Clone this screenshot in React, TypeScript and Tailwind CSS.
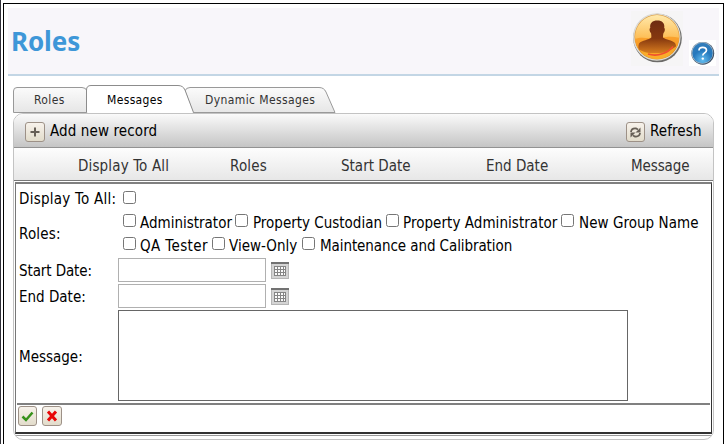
import React from "react";

function Tick({ label, className, text }: { label: string; className?: string; text?: string }) {
  return (
    <label className={`flex h-[23px] shrink-0 ${className ?? ""}`}>
      <Box />
      <span className={`-mt-px whitespace-nowrap leading-5 ${text ?? "ml-1"}`}>{label}</span>
    </label>
  );
}

function Box() {
  return <input type="checkbox" className="block size-[13px] shrink-0 appearance-none rounded-[2.5px] border border-[#767676] bg-white" />;
}

function IconButton({ children, className }: { children: React.ReactNode; className?: string }) {
  return (
    <button className={`flex h-5 shrink-0 items-center justify-center rounded-[3px] border border-[#9d9187] bg-linear-to-b from-[#f7f2eb] to-[#e2dccb] ${className ?? ""}`}>
      {children}
    </button>
  );
}

function Avatar() {
  return (
    <svg width="52" height="55" viewBox="0 0 52 55" className="block">
      <defs>
        <linearGradient id="gold" x1="0" y1="0" x2="0" y2="1">
          <stop offset="0" stopColor="#ffe9ab" />
          <stop offset=".5" stopColor="#fdc05a" />
          <stop offset=".75" stopColor="#f9a02c" />
          <stop offset="1" stopColor="#ffc936" />
        </linearGradient>
        <linearGradient id="person" x1="0" y1="0" x2="0" y2="1">
          <stop offset="0" stopColor="#6e2c12" />
          <stop offset=".55" stopColor="#85380f" />
          <stop offset="1" stopColor="#d77c1f" />
        </linearGradient>
        <clipPath id="disc"><circle cx="26" cy="26" r="22" /></clipPath>
      </defs>
      <rect width="52" height="55" fill="#f6f5f6" />
      <circle cx="26.500" cy="27" r="24.300" fill="#6b6a68" />
      <circle cx="25.800" cy="26" r="23.800" fill="#dddcd5" />
      <circle cx="26" cy="26" r="22.500" fill="#d9902f" />
      <circle cx="26" cy="26" r="22" fill="url(#gold)" />
      <g clipPath="url(#disc)">
        <path d="M2 29C10 24 20 29 31 27C38 25 44 26 50 27V50H2Z" fill="#f8981f" opacity=".75" />
        <path d="M19.300 17C18.500 12 21.500 9.500 26.300 9.500S34 12 33.200 17C34.300 17 34 21 32.500 22C32 24 32 25 32 26.500C35 29 41 29 44 32C46 35 45 39 43 42H9C7 38 7 35 8 32.500C11 29 18 29 20.300 26.500C20.500 25 20.300 24 20 22C18.500 21 18 17 19.300 17Z" fill="url(#person)" />
        <path d="M4 36C14 44 33 46 47 34V50H4Z" fill="#faae2b" opacity=".9" />
        <path d="M17 43C27 46 37 42 42 35.500" fill="none" stroke="#f0502e" strokeWidth="1.700" />
      </g>
    </svg>
  );
}

function Help() {
  return (
    <svg width="27" height="26" viewBox="0 0 27 26" className="block">
      <defs>
        <radialGradient id="blue" cx=".5" cy=".85" r=".85">
          <stop offset="0" stopColor="#63bdf0" />
          <stop offset=".55" stopColor="#2578bd" />
          <stop offset="1" stopColor="#347eba" />
        </radialGradient>
      </defs>
      <rect width="27" height="26" fill="white" />
      <circle cx="13.800" cy="13.300" r="11.400" fill="#3c4f66" />
      <circle cx="13.300" cy="12.800" r="10.900" fill="#a5b8c6" />
      <circle cx="13.500" cy="13" r="10.200" fill="url(#blue)" />
      <path d="M10 10.500C10 6.300 17.500 6.300 17.500 10.200C17.500 13 13.800 12.700 13.800 15.500" fill="none" stroke="white" strokeWidth="1.700" />
      <circle cx="13.800" cy="18.600" r="1.200" fill="white" />
    </svg>
  );
}

function Calendar() {
  return (
    <svg width="18" height="17" viewBox="0 0 18 17" className="block">
      <rect x=".5" y=".5" width="17" height="16" fill="#d4d4d4" stroke="#b5b5b5" />
      <path d="M0 1H18" stroke="#727272" strokeWidth="2" />
      <rect x="3" y="4" width="12" height="10" fill="#858585" />
      <path d="M4 5H6V7H4ZM7 5H9V7H7ZM10 5H12V7H10ZM13 5H14V7H13ZM4 8H6V10H4ZM7 8H9V10H7ZM10 8H12V10H10ZM13 8H14V10H13ZM4 11H6V13H4ZM7 11H9V13H7ZM10 11H12V13H10ZM13 11H14V13H13Z" fill="#fafafa" />
    </svg>
  );
}

function Tabs() {
  return (
    <nav className="relative ml-[5px] mt-[9px] h-7 w-[323px] text-[12px] leading-4 text-[#333]">
      <svg width="323" height="28" viewBox="0 0 323 28" className="absolute inset-0">
        <defs>
          <linearGradient id="tab" x1="0" y1="0" x2="0" y2="1">
            <stop offset="0" stopColor="#fbfbfb" /><stop offset="1" stopColor="#e6e6e6" />
          </linearGradient>
        </defs>
        <path d="M.5 27.500V6Q.5 2.500 4 2.500H69Q73 2.500 74 6V27.500Z" fill="url(#tab)" stroke="#999" />
        <path d="M180 27.500L172 6Q173 2.500 177 2.500H306Q311 2.500 313 7L322 27.500Z" fill="url(#tab)" stroke="#999" />
        <path d="M73.500 27.500V5Q73.500 .5 78 .5H165Q170 .5 172 5L180.500 27.500" fill="white" stroke="#8c8c8c" />
      </svg>
      <div className="relative flex pt-[7px]">
        <span className="ml-[21px] w-[73px] tracking-[0.4px]">Roles</span>
        <span className="w-[98px] tracking-[0.35px] text-black">Messages</span>
        <span className="whitespace-nowrap tracking-[0.4px]">Dynamic Messages</span>
      </div>
    </nav>
  );
}

export default function App() {
  return (
    <div className="flex h-[444px] w-[728px] overflow-hidden bg-white font-['DejaVu_Sans_Condensed','DejaVu_Sans',sans-serif] text-[15px] text-black [font-stretch:condensed]">
      <div className="h-full w-px shrink-0 bg-[#303038]" />
      <main className="ml-[2px] mt-[3px] h-[441px] w-[721px] shrink-0 border-x border-t border-black px-1 pt-1">
        <header className="flex h-[68px] w-[711px] border-b-2 border-[#c3d6e5] bg-[#f8f6fa]">
          <h1 className="ml-[3px] mt-[17px] w-[620px] font-['Noto_Sans',sans-serif] text-[26px] font-bold leading-8 tracking-[-0.1px] text-[#3e97d8]">Roles</h1>
          <div className="mt-[3px]"><Avatar /></div>
          <div className="ml-[6px] mt-8"><Help /></div>
        </header>
        <Tabs />
        <section className="ml-[5px] h-[327px] w-[701px] overflow-hidden rounded-[10px] border border-[#c3c3c3]">
          <div className="flex h-[34px] items-start border-b border-[#929292] bg-linear-to-b from-[#fafafa] to-[#c5c5c5] pl-[11px] pt-2 leading-5">
            <IconButton className="w-5">
              <svg width="12" height="12" viewBox="0 0 12 12"><path d="M6 1.500V10.500M1.500 6H10.500" stroke="#665f56" strokeWidth="2" /></svg>
            </IconButton>
            <span className="-mt-px ml-[5px] w-[576px] tracking-[0.12px]">Add new record</span>
            <IconButton className="w-[19px]">
              <svg width="13" height="13" viewBox="0 0 13 13" fill="none" stroke="#665f56" strokeWidth="1.800"><path d="M2 6Q2.500 2 7 2.500L9 3.500M11 7Q10.500 11 6 10.500L4 9.500" /><path d="M11.500 1.500V6.500H6.500ZM1.500 11.500V6.500H6.500Z" fill="#665f56" stroke="none" /></svg>
            </IconButton>
            <span className="-mt-px ml-[5px] tracking-[0.1px]">Refresh</span>
          </div>
          <div className="flex h-[33px] border-b border-[#777] bg-linear-to-b from-[#fdfdfd] to-[#e7e7e7] pt-[8px] leading-5 text-[#333]">
            <span className="ml-16 w-[152px] tracking-[0.15px]">Display To All</span>
            <span className="w-[111px] tracking-[0.2px]">Roles</span>
            <span className="w-[145px]">Start Date</span>
            <span className="w-[145px]">End Date</span>
            <span className="tracking-[-0.1px]">Message</span>
          </div>
          <form className="ml-px mt-px h-[252px] w-[697px] border-b-2 border-l border-r border-t-2 border-[#333] border-l-[#777] border-t-[#808080] bg-white">
            <div className="h-[219px] pl-[3px] leading-5">
              <div className="flex h-[30px] pt-[7px]"><span className="-mt-[2px] w-[104px] tracking-[0.25px]">Display To All:</span><Box /></div>
              <div className="flex h-[44px]">
                <span className="mt-[10px] w-[104px] shrink-0 tracking-[0.2px]">Roles:</span>
                <div>
                  <div className="flex h-[23px]">
                    <Tick label="Administrator" className="w-[112px]" />
                    <Tick label="Property Custodian" className="w-[151px]" text="ml-[5px]" />
                    <Tick label="Property Administrator" className="w-[175px]" text="ml-1 tracking-[0.05px]" />
                    <Tick label="New Group Name" className="w-[138px]" text="ml-[5px] tracking-[0.05px]" />
                  </div>
                  <div className="flex h-[23px]">
                    <Tick label="QA Tester" className="w-[89px]" text="ml-1 tracking-[0.4px]" />
                    <Tick label="View-Only" className="w-[90px]" text="ml-1" />
                    <Tick label="Maintenance and Calibration" text="ml-[5px] tracking-[-0.08px]" />
                  </div>
                </div>
              </div>
              <div className="flex h-[26px]"><span className="mt-[3px] w-[99px] tracking-[-0.1px]">Start Date:</span><div className="h-6 w-[148px] border border-[#b0b0b0]" /><div className="ml-[5px] mt-1"><Calendar /></div></div>
              <div className="flex h-[26px]"><span className="mt-[3px] w-[99px]">End Date:</span><div className="h-6 w-[148px] border border-[#b0b0b0]" /><div className="ml-[5px] mt-1"><Calendar /></div></div>
              <div className="flex h-[91px]"><span className="mt-[37px] w-[99px]">Message:</span><div className="h-[91px] w-[510px] border border-[#666]" /></div>
            </div>
            <div className="ml-px mr-px flex h-[28px] gap-[5px] border-t-2 border-[#808080] pl-px pt-[1px]">
              <IconButton className="w-[19px]"><svg width="13" height="13" viewBox="0 0 13 13"><path d="M1.500 6.500L5 10L11.500 2.500" fill="none" stroke="#36911b" strokeWidth="2.500" /></svg></IconButton>
              <IconButton className="w-5"><svg width="12" height="12" viewBox="0 0 12 12"><path d="M2 1.500L10 10.500M10 1.500L2 10.500" stroke="#e80707" strokeWidth="3" /></svg></IconButton>
            </div>
          </form>
          <div className="mt-px h-px bg-[#999]" />
        </section>
      </main>
    </div>
  );
}
